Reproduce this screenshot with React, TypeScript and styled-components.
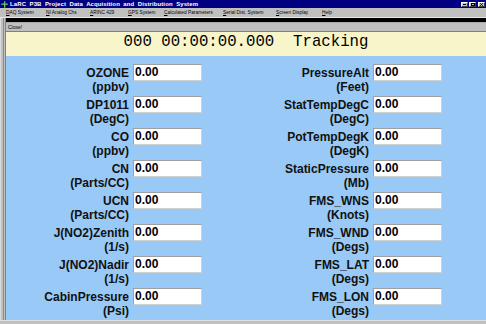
import React from "react";
import styled, { createGlobalStyle } from "styled-components";

const Global = createGlobalStyle`
  html, body { margin: 0; padding: 0; background: #c0c0c0; }
  body { width: 486px; height: 324px; overflow: hidden; font-family: "Liberation Sans", Arial, sans-serif; }
`;

const Window = styled.div`
  width: 486px;
  height: 324px;
  display: flex;
  flex-direction: column;
  background: #c0c0c0;
  overflow: hidden;
`;

const TitleBar = styled.div`
  height: 8px;
  background: #000080;
  display: flex;
  align-items: center;
  padding-left: 1px;
  gap: 2px;
  flex: none;
`;

const TitleText = styled.span`
  color: #ffffff;
  font-weight: bold;
  font-size: 6px;
  line-height: 8px;
  white-space: nowrap;
  word-spacing: 1.7px;
  letter-spacing: 0.1px;
  flex: 1;
`;

const WinButtons = styled.div`
  display: flex;
  gap: 1px;
  padding-right: 1px;
`;

const WinButton = styled.div<{ $gap?: number }>`
  width: 7px;
  height: 5px;
  background: #c0c0c0;
  border: 1px solid;
  border-color: #ffffff #404040 #404040 #ffffff;
  box-sizing: border-box;
  margin-left: ${(p) => p.$gap ?? 0}px;
  display: flex;
  align-items: center;
  justify-content: center;
`;

const MenuBar = styled.div`
  height: 10px;
  display: flex;
  align-items: center;
  padding-left: 6px;
  background: #c0c0c0;
  border-bottom: 1px solid #e8e8e8;
  box-sizing: border-box;
  flex: none;
`;

const MenuItem = styled.span<{ $w: number }>`
  width: ${(p) => p.$w}px;
  flex: none;
  font-size: 4.8px;
  line-height: 9px;
  color: #000;
  white-space: nowrap;
`;

const Body = styled.div`
  flex: 1;
  display: flex;
  min-height: 0;
`;

const FrameEdge = styled.div`
  width: 6px;
  flex: none;
  box-sizing: border-box;
  background: #c0c0c0;
  border-left: 1px solid #dcdcdc;
  border-right: 1px solid #808080;
  box-shadow: inset 2px 0 0 #c0c0c0, inset 3px 0 0 #8a8a8a;
`;

const Main = styled.div`
  flex: 1;
  display: flex;
  flex-direction: column;
  min-width: 0;
`;

const BlackBar = styled.div`
  height: 4px;
  background: #000;
  flex: none;
`;

const ToolBar = styled.div`
  height: 10px;
  box-sizing: border-box;
  padding-left: 2px;
  display: flex;
  align-items: center;
  background: #c0c0c0;
  border-top: 1px solid #a8a8a8;
  border-bottom: 1px solid #808080;
  font-size: 5px;
  color: #000;
  flex: none;
`;

const Banner = styled.div`
  height: 24px;
  box-sizing: border-box;
  padding-bottom: 3px;
  background: #f7f5c9;
  display: flex;
  justify-content: center;
  align-items: center;
  font-family: "Liberation Mono", "DejaVu Sans Mono", monospace;
  font-size: 15.7px;
  line-height: 21px;
  color: #000;
  white-space: pre;
  flex: none;
`;

const Panel = styled.div`
  flex: 1;
  background: #99c9f7;
  display: grid;
  grid-template-columns: 240px 240px;
  grid-auto-rows: 30px;
  row-gap: 2px;
  align-content: start;
  padding-top: 8px;
  box-sizing: border-box;
`;

const Cell = styled.div`
  display: flex;
  align-items: flex-start;
  gap: 4px;
`;

const Label = styled.div`
  width: 123px;
  text-align: right;
  padding-top: 2px;
  font-weight: bold;
  font-size: 12px;
  line-height: 14px;
  color: #111;
  white-space: nowrap;
`;

const Field = styled.div`
  width: 69px;
  height: 17px;
  box-sizing: border-box;
  background: #ffffff;
  border: 1px solid;
  border-color: #a0a0a0 #d0d0d0 #d0d0d0 #a0a0a0;
  padding-left: 1px;
  font-weight: bold;
  font-size: 12px;
  line-height: 15px;
  color: #000;
`;

const BottomEdge = styled.div`
  height: 4px;
  background: #c0c0c0;
  border-top: 1px solid #e0e0e0;
  box-sizing: border-box;
  flex: none;
`;

const menu: [string, string, number][] = [
  ["D", "AQ System", 40],
  ["N", "I Analog Chs", 44],
  ["A", "RINC 429", 38],
  ["G", "PS System", 36],
  ["C", "alculated Parameters", 59],
  ["S", "erial Dist. System", 53],
  ["S", "creen Display", 46],
  ["H", "elp", 20],
];

const left: [string, string][] = [
  ["OZONE", "(ppbv)"],
  ["DP1011", "(DegC)"],
  ["CO", "(ppbv)"],
  ["CN", "(Parts/CC)"],
  ["UCN", "(Parts/CC)"],
  ["J(NO2)Zenith", "(1/s)"],
  ["J(NO2)Nadir", "(1/s)"],
  ["CabinPressure", "(Psi)"],
];

const right: [string, string][] = [
  ["PressureAlt", "(Feet)"],
  ["StatTempDegC", "(DegC)"],
  ["PotTempDegK", "(DegK)"],
  ["StaticPressure", "(Mb)"],
  ["FMS_WNS", "(Knots)"],
  ["FMS_WND", "(Degs)"],
  ["FMS_LAT", "(Degs)"],
  ["FMS_LON", "(Degs)"],
];

const AppIcon = () => (
  <svg width="7" height="7" viewBox="0 0 7 7">
    <path d="M3 0h1.5v2.5H7V4H4.5v3H3V4H0V2.5h3z" fill="#2e9a2e" />
    <path d="M3.5 1v5M1 3.2h5" stroke="#7ee07e" strokeWidth="0.6" />
  </svg>
);

export default function App() {
  const rows: React.ReactNode[] = [];
  for (let i = 0; i < left.length; i++) {
    [left[i], right[i]].forEach(([name, unit], j) => {
      rows.push(
        <Cell key={`${i}-${j}`}>
          <Label>
            {name}
            <br />
            {unit}
          </Label>
          <Field>0.00</Field>
        </Cell>
      );
    });
  }
  return (
    <>
      <Global />
      <Window>
        <TitleBar>
          <AppIcon />
          <TitleText>LaRC P3B Project Data Acquisition and Distribution System</TitleText>
          <WinButtons>
            <WinButton>
              <svg width="3" height="1"><rect width="3" height="1" fill="#000" /></svg>
            </WinButton>
            <WinButton>
              <svg width="4" height="3"><rect x="0.5" y="0.5" width="3" height="2" fill="none" stroke="#000" strokeWidth="1" /></svg>
            </WinButton>
            <WinButton $gap={1}>
              <svg width="3" height="3"><path d="M0 0L3 3M3 0L0 3" stroke="#000" strokeWidth="0.8" /></svg>
            </WinButton>
          </WinButtons>
        </TitleBar>
        <MenuBar>
          {menu.map(([u, rest, w], k) => (
            <MenuItem key={k} $w={w}>
              <u>{u}</u>
              {rest}
            </MenuItem>
          ))}
        </MenuBar>
        <Body>
          <FrameEdge />
          <Main>
            <BlackBar />
            <ToolBar>Close!</ToolBar>
            <Banner>{"000 00:00:00.000  Tracking"}</Banner>
            <Panel>{rows}</Panel>
          </Main>
        </Body>
        <BottomEdge />
      </Window>
    </>
  );
}
